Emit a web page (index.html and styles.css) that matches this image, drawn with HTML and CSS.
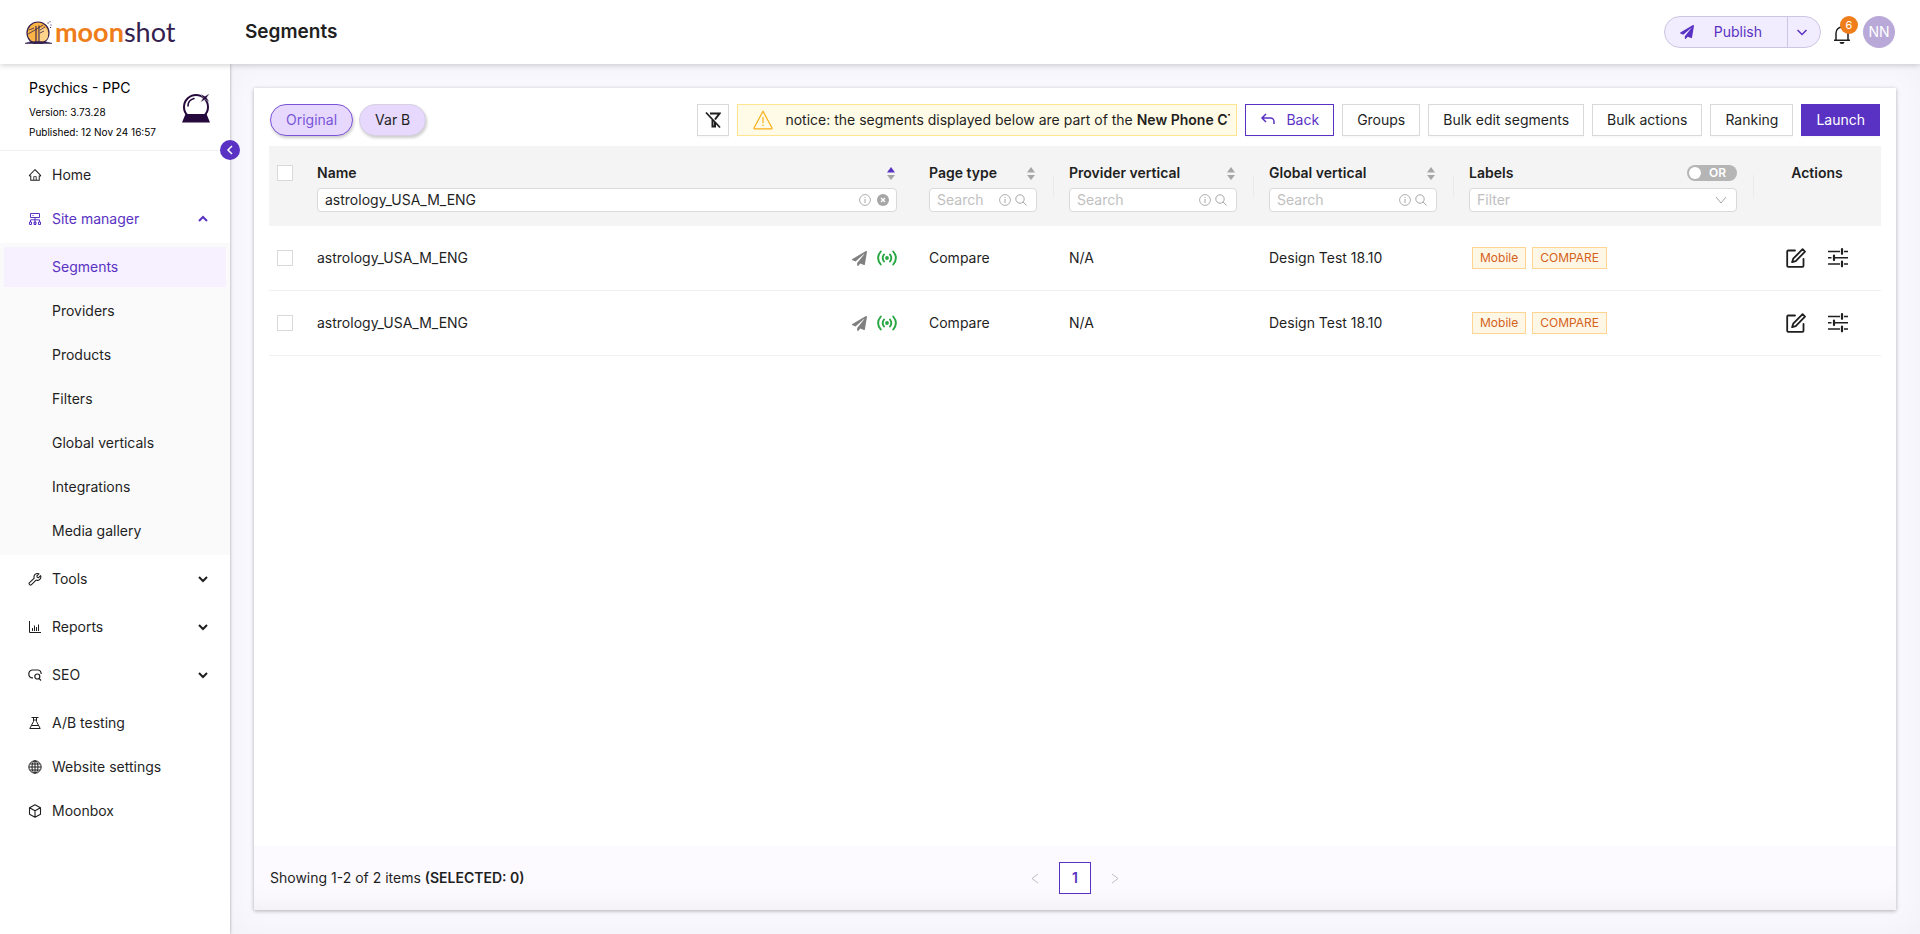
FILE: index.html
```html
<!DOCTYPE html>
<html lang="en">
<head>
<meta charset="utf-8">
<title>Segments</title>
<link rel="stylesheet" href="styles.css">
</head>
<body>
<svg class="sprite" aria-hidden="true">
  <symbol id="home" viewBox="0 0 1024 1024"><path fill="currentColor" d="M946.5 505L560.1 118.8l-25.9-25.9a31.5 31.5 0 00-44.4 0L77.5 505a63.9 63.9 0 00-18.8 46c.4 35.2 29.7 63.3 64.9 63.3h42.5V940h691.8V614.3h43.4c17.1 0 33.2-6.7 45.3-18.8a63.6 63.6 0 0018.7-45.3c0-17-6.7-33.1-18.8-45.2zM568 868H456V664h112v204zm217.9-325.7V868H632V640c0-22.1-17.9-40-40-40H432c-22.1 0-40 17.9-40 40v228H238.1V542.3h-96l370-369.7 23.1 23.1L882 542.3h-96.1z"/></symbol>
  <symbol id="sitemap" viewBox="0 0 14 14"><g fill="none" stroke="currentColor"><path d="M2.5 1.5h9v4h-9zM7 5.500v7M2.500 10V7.800h9V10"/><path d="M1.500 10h2v2.500h-2zM6 10h2v2.500H6zM10.500 10h2v2.500h-2zM4.500 3.500h1"/></g></symbol>
  <symbol id="tool" viewBox="0 0 14 14"><path fill="none" stroke="currentColor" stroke-width="1.100" stroke-linejoin="round" d="M1.300 10.900l4.900-4.700a3.500 3.500 0 014.700-4.400L8.900 3.900l.3 1.400 1.400.3 2-2a3.500 3.500 0 01-4.500 4.500l-4.900 4.700a1 1 0 01-1.300 0l-.6-.6a1 1 0 010-1.300z"/></symbol>
  <symbol id="chart" viewBox="0 0 14 14"><path fill="none" stroke="currentColor" d="M1.500 1v11.500H13M4.500 8v3M6.500 5.500V11M8.500 7v4M10.500 4.500V11"/></symbol>
  <symbol id="seo" viewBox="0 0 14 14"><g fill="none" stroke="currentColor" stroke-width="1.200"><path d="M5 9.900H4Q.8 9.200.8 6T4 2h6q3 .4 3.200 4"/><circle cx="9.300" cy="8.500" r="2.500"/><path d="M11 10.300l2 2.200"/></g></symbol>
  <symbol id="flask" viewBox="0 0 14 14"><g fill="none" stroke="currentColor" stroke-linejoin="round"><path d="M3.500 1.500h7M5.500 1.500v4L1.800 12.500h10.400L8.500 5.500v-4M3.500 9.500h7M5.500 4h3"/></g></symbol>
  <symbol id="globe" viewBox="0 0 14 14"><g fill="none" stroke="currentColor"><circle cx="7" cy="7" r="6.200"/><ellipse cx="7" cy="7" rx="3" ry="6.200"/><path d="M7 1v12M1 7h12M2 4h10M2 10h10"/></g></symbol>
  <symbol id="box" viewBox="0 0 14 14"><path fill="none" stroke="currentColor" stroke-width="1.100" stroke-linejoin="round" d="M7 .8l5.500 2.900v6.600L7 13.200l-5.500-2.900V3.700zM1.500 3.700L7 6.700l5.500-3M7 6.700v6.500"/></symbol>
  <symbol id="plane" viewBox="0 0 512 512"><path fill="currentColor" d="M476 3.200L12.500 270.600c-18.100 10.400-15.800 35.600 2.200 43.200L121 358.400l287.300-253.200c5.500-4.900 13.300 2.600 8.600 8.300L176 407v80.500c0 23.600 28.500 32.900 42.500 15.800L282 426l124.600 52.200c14.200 6 30.400-2.900 33-18.200l72-432C515 7.800 493.300-6.800 476 3.200z"/></symbol>
  <symbol id="down" viewBox="0 0 10 10"><path fill="none" stroke="currentColor" stroke-width="2" d="M1 3l4 4 4-4"/></symbol>
  <symbol id="up" viewBox="0 0 10 10"><path fill="none" stroke="currentColor" stroke-width="2" d="M1 7l4-4 4 4"/></symbol>
  <symbol id="thindown" viewBox="0 0 12 12"><path fill="none" stroke="currentColor" stroke-width="1" d="M1 3l5 6 5-6"/></symbol>
  <symbol id="meddown" viewBox="0 0 12 12"><path fill="none" stroke="currentColor" stroke-width="1.500" d="M1.500 4L6 8.500 10.500 4"/></symbol>
  <symbol id="left" viewBox="0 0 10 10"><path fill="none" stroke="currentColor" stroke-width="1.500" d="M7 1L3 5l4 4"/></symbol>
  <symbol id="prev" viewBox="0 0 12 12"><path fill="none" stroke="currentColor" d="M9 2L3 6.500 9 11"/></symbol>
  <symbol id="next" viewBox="0 0 12 12"><path fill="none" stroke="currentColor" d="M3 2l6 4.500L3 11"/></symbol>
  <symbol id="bell" viewBox="0 0 18 20"><path fill="none" stroke="currentColor" stroke-width="1.500" d="M1 16.200h16M3 16V9a6 6 0 0112 0v7M9 3V1"/><path fill="currentColor" d="M6.500 18h5a2.500 2 0 01-5 0z"/></symbol>
  <symbol id="nofilter" viewBox="0 0 16 18"><g fill="none" stroke="currentColor" stroke-width="2"><path d="M5 2.500h9.500L10 8.500M7.500 9v6.500h2.500v-4.500"/><path stroke-width="1.800" d="M1 1.500l14 15"/></g></symbol>
  <symbol id="warn" viewBox="0 0 20 20"><path fill="none" stroke="currentColor" stroke-width="1.200" stroke-linejoin="round" d="M10 1.200l9 16.800q.2.800-.6.800H1.600q-.8 0-.6-.8z"/><path fill="none" stroke="currentColor" stroke-width="1.200" d="M10 7v6M10 14.500V16"/></symbol>
  <symbol id="back" viewBox="0 0 16 14"><path fill="none" stroke="currentColor" stroke-width="1.500" d="M6 1L2 5l4 4M2 5h8.500a3.500 3.500 0 013.500 3.500V11"/></symbol>
  <symbol id="info" viewBox="0 0 12 12"><circle cx="6" cy="6" r="5.400" fill="none" stroke="currentColor" stroke-width=".9"/><path stroke="currentColor" d="M6 5v4M6 3v1"/></symbol>
  <symbol id="search" viewBox="0 0 12 12"><circle cx="5" cy="5" r="4.200" fill="none" stroke="currentColor"/><path stroke="currentColor" d="M8 8l3.600 3.600"/></symbol>
  <symbol id="clear" viewBox="0 0 12 12"><circle cx="6" cy="6" r="6" fill="currentColor"/><path stroke="#fff" stroke-width="1.300" d="M4 4l4 4M8 4L4 8"/></symbol>
  <symbol id="live" viewBox="0 0 20 16"><g fill="none" stroke="currentColor" stroke-width="1.900" stroke-linecap="round"><path d="M3.800 1.500q-5.400 6.500 0 13M16.200 1.500q5.400 6.500 0 13M7 4.500q-2.600 3.500 0 7M13 4.500q2.600 3.500 0 7"/></g><circle cx="10" cy="8" r="1.900" fill="currentColor"/></symbol>
  <symbol id="edit" viewBox="0 0 20 20"><g fill="none" stroke="currentColor" stroke-width="1.800" stroke-linejoin="round" stroke-linecap="round"><path d="M9 2.500H2.200q-1 0-1 1v14.300q0 1 1 1h14.300q1 0 1-1v-7"/><path d="M16.600 1.200l2.400 2.400-9.300 9.600-3.600 1 1.100-3.500z"/></g></symbol>
  <symbol id="tune" viewBox="0 0 20 20"><path fill="none" stroke="currentColor" stroke-width="1.500" d="M0 3.500h12M16 3.500h4M0 9.800h3.500M7 9.800h13M0 16h12M16 16h4"/><path fill="none" stroke="currentColor" stroke-width="2.200" stroke-linecap="round" d="M14 1.200v4.600M6 7.500v4.600M14 13.700v4.600"/></symbol>
</svg>

<header class="topbar">
  <a class="logo" href="#" aria-label="moonshot">
    <svg class="logo-mark" viewBox="0 0 27 23" aria-hidden="true">
      <circle cx="13" cy="12" r="11" fill="#fbb445" stroke="#33204f" stroke-width="1.200"/>
      <path d="M14 7q8-2 9 5t-5 8h-5z" fill="#fdd48a"/>
      <path d="M11 5v16M14 4.500V21" fill="none" stroke="#33204f" stroke-width="1.100"/><path d="M3 13l7-4 8-5M4 9l5-2M15 9l5-3M15 12l4-2" fill="none" stroke="#33204f" stroke-width=".8"/>
      <path d="M0 22.400q4-2 13-2t14 2z" fill="#33204f" stroke="#33204f" stroke-width=".6"/>
      <path d="M22.500 2h1.200M25.500 4h1M24.500.800h1M25 6.500h1" stroke="#33204f"/>
    </svg>
    <span class="logo-text"><b>moon</b>shot</span>
  </a>
  <h1 class="title">Segments</h1>
  <div class="top-actions">
    <div class="publish">
      <button class="publish-main" type="button"><svg class="i14"><use href="#plane"/></svg><span>Publish</span></button>
      <button class="publish-more" type="button" aria-label="More publish options"><svg class="i12"><use href="#meddown"/></svg></button>
    </div>
    <button class="bell" type="button" aria-label="Notifications"><svg><use href="#bell"/></svg><span class="badge">6</span></button>
    <button class="avatar" type="button">NN</button>
  </div>
</header>

<div class="shell">
  <aside class="sidebar">
    <div class="project">
      <div class="project-text">
        <div class="project-name">Psychics - PPC</div>
        <div class="project-meta">Version: 3.73.28</div>
        <div class="project-meta">Published: 12 Nov 24 16:57</div>
      </div>
      <svg class="ball" viewBox="0 0 28 30" aria-hidden="true">
        <circle cx="14" cy="14" r="12" fill="#fff" stroke="#260a3d" stroke-width="2"/>
        <path d="M6 13q0-6 6-7.500" fill="none" stroke="#260a3d" stroke-width="1.600" stroke-linecap="round"/>
        <path d="M3.500 21h21L28 29.500H0z" fill="#260a3d"/>
        <path d="M18.500 1l4.500 2.200L27.500.5l-2.800 4.200L27.500 9 23 6.500l-4.500 2.700 2.600-4.500z" fill="#260a3d" stroke="#fff" stroke-width=".4"/>
      </svg>
      <button class="collapse" type="button" aria-label="Collapse menu"><svg><use href="#left"/></svg></button>
    </div>
    <nav class="menu">
      <a class="item" href="#"><svg class="i14"><use href="#home"/></svg>Home</a>
      <a class="item active" href="#"><svg class="i14"><use href="#sitemap"/></svg>Site manager<svg class="arrow"><use href="#up"/></svg></a>
      <div class="submenu">
        <a class="item selected" href="#">Segments</a>
        <a class="item" href="#">Providers</a>
        <a class="item" href="#">Products</a>
        <a class="item" href="#">Filters</a>
        <a class="item" href="#">Global verticals</a>
        <a class="item" href="#">Integrations</a>
        <a class="item" href="#">Media gallery</a>
      </div>
      <div class="groups">
        <a class="item" href="#"><svg class="i14"><use href="#tool"/></svg>Tools<svg class="arrow"><use href="#down"/></svg></a>
        <a class="item" href="#"><svg class="i14"><use href="#chart"/></svg>Reports<svg class="arrow"><use href="#down"/></svg></a>
        <a class="item" href="#"><svg class="i14"><use href="#seo"/></svg>SEO<svg class="arrow"><use href="#down"/></svg></a>
      </div>
      <a class="item" href="#"><svg class="i14"><use href="#flask"/></svg>A/B testing</a>
      <a class="item" href="#"><svg class="i14"><use href="#globe"/></svg>Website settings</a>
      <a class="item" href="#"><svg class="i14"><use href="#box"/></svg>Moonbox</a>
    </nav>
  </aside>

  <main class="content">
    <section class="panel">
      <div class="toolbar">
        <button class="pill on" type="button">Original</button>
        <button class="pill" type="button">Var B</button>
        <div class="tools">
          <button class="btn square" type="button" aria-label="Clear filters"><svg><use href="#nofilter"/></svg></button>
          <div class="notice"><svg><use href="#warn"/></svg><p>notice: the segments displayed below are part of the <b>New Phone CT</b></p></div>
          <button class="btn outline" type="button"><svg><use href="#back"/></svg>Back</button>
          <button class="btn" type="button">Groups</button>
          <button class="btn" type="button">Bulk edit segments</button>
          <button class="btn" type="button">Bulk actions</button>
          <button class="btn" type="button">Ranking</button>
          <button class="btn primary" type="button">Launch</button>
        </div>
      </div>

      <div class="grid-wrap">
      <table class="grid">
        <colgroup><col class="c-check"><col><col class="c-page"><col class="c-vert"><col class="c-vert"><col class="c-labels"><col class="c-actions"></colgroup>
        <thead>
          <tr>
            <th class="check"><input type="checkbox" aria-label="Select all"></th>
            <th>
              <div class="head"><label for="f-name">Name</label><svg class="sort asc" viewBox="0 0 8 13"><path class="s-up" d="M0 5.500L4 0l4 5.500z"/><path class="s-down" d="M0 8h8l-4 5z"/></svg></div>
              <div class="field"><input id="f-name" type="text" value="astrology_USA_M_ENG"><svg class="i12"><use href="#info"/></svg><svg class="i12 clear"><use href="#clear"/></svg></div>
            </th>
            <th>
              <div class="head"><label for="f-page">Page type</label><svg class="sort" viewBox="0 0 8 13"><path class="s-up" d="M0 5.500L4 0l4 5.500z"/><path class="s-down" d="M0 8h8l-4 5z"/></svg></div>
              <div class="field"><input id="f-page" type="text" placeholder="Search"><svg class="i12"><use href="#info"/></svg><svg class="i12"><use href="#search"/></svg></div>
            </th>
            <th class="sep">
              <div class="head"><label for="f-prov">Provider vertical</label><svg class="sort" viewBox="0 0 8 13"><path class="s-up" d="M0 5.500L4 0l4 5.500z"/><path class="s-down" d="M0 8h8l-4 5z"/></svg></div>
              <div class="field"><input id="f-prov" type="text" placeholder="Search"><svg class="i12"><use href="#info"/></svg><svg class="i12"><use href="#search"/></svg></div>
            </th>
            <th class="sep">
              <div class="head"><label for="f-glob">Global vertical</label><svg class="sort" viewBox="0 0 8 13"><path class="s-up" d="M0 5.500L4 0l4 5.500z"/><path class="s-down" d="M0 8h8l-4 5z"/></svg></div>
              <div class="field"><input id="f-glob" type="text" placeholder="Search"><svg class="i12"><use href="#info"/></svg><svg class="i12"><use href="#search"/></svg></div>
            </th>
            <th class="sep">
              <div class="head"><label for="f-lab">Labels</label><button class="switch" type="button" role="switch" aria-checked="false"><i></i>OR</button></div>
              <div class="field select"><select id="f-lab"><option>Filter</option></select><svg class="i12"><use href="#thindown"/></svg></div>
            </th>
            <th class="sep center"><div class="head">Actions</div></th>
          </tr>
        </thead>
        <tbody>
          <tr>
            <td class="check"><input type="checkbox" aria-label="Select row 1"></td>
            <td><div class="name">astrology_USA_M_ENG<span class="status"><svg class="i16"><use href="#plane"/></svg><svg class="live"><use href="#live"/></svg></span></div></td>
            <td>Compare</td><td>N/A</td><td>Design Test 18.10</td>
            <td><div class="tags"><span class="tag">Mobile</span><span class="tag">COMPARE</span></div></td>
            <td><div class="acts"><button type="button" aria-label="Edit"><svg><use href="#edit"/></svg></button><button type="button" aria-label="Settings"><svg><use href="#tune"/></svg></button></div></td>
          </tr>
          <tr>
            <td class="check"><input type="checkbox" aria-label="Select row 2"></td>
            <td><div class="name">astrology_USA_M_ENG<span class="status"><svg class="i16"><use href="#plane"/></svg><svg class="live"><use href="#live"/></svg></span></div></td>
            <td>Compare</td><td>N/A</td><td>Design Test 18.10</td>
            <td><div class="tags"><span class="tag">Mobile</span><span class="tag">COMPARE</span></div></td>
            <td><div class="acts"><button type="button" aria-label="Edit"><svg><use href="#edit"/></svg></button><button type="button" aria-label="Settings"><svg><use href="#tune"/></svg></button></div></td>
          </tr>
        </tbody>
      </table>
      </div>

      <footer class="foot">
        <p>Showing 1-2 of 2 items <b>(SELECTED: 0)</b></p>
        <div class="pager">
          <button type="button" aria-label="Previous page"><svg class="i12"><use href="#prev"/></svg></button>
          <button class="current" type="button">1</button>
          <button type="button" aria-label="Next page"><svg class="i12"><use href="#next"/></svg></button>
        </div>
      </footer>
    </section>
  </main>
</div>
</body>
</html>
```
FILE: styles.css
```css
:root {
  --purple: #5a32c3;
  --ink: #1f1f1f;
  --line: #d9d9d9;
  --orange: #ef7d1a;
}
* { box-sizing: border-box; }
body {
  margin: 0;
  min-height: 100vh;
  display: flex;
  flex-direction: column;
  font: 14px/22px Inter, "Liberation Sans", sans-serif;
  color: var(--ink);
  background: #fff;
}
button, input, select { font: inherit; color: inherit; margin: 0; }
button { padding: 0; border: 0; background: none; cursor: pointer; }
a { color: inherit; text-decoration: none; }
p, h1 { margin: 0; }
b { font-weight: 600; }
svg { display: block; flex: none; }
.sprite { position: absolute; width: 0; height: 0; }
.i12 { width: 12px; height: 12px; }
.i14 { width: 14px; height: 14px; }
.i16 { width: 15px; height: 15px; }

/* Top bar */
.topbar {
  position: relative;
  z-index: 2;
  display: flex;
  align-items: center;
  height: 64px;
  padding: 0 25px;
  background: #fff;
  box-shadow: 0 1px 6px rgba(0, 0, 0, .2);
}
.logo { display: flex; align-items: center; gap: 3px; width: 220px; }
.logo-mark { width: 27px; height: 23px; }
.logo-text { font: 27px/32px Lato, sans-serif; color: #33204f; }
.logo-text b { font-weight: 700; color: var(--orange); }
.title { flex: 1; font-size: 19px; line-height: 28px; font-weight: 600; }
.top-actions { display: flex; align-items: center; gap: 12px; }
.publish {
  display: flex;
  height: 32px;
  border: 1px solid #cdc6e2;
  border-radius: 16px;
  background: #f1ecfe;
  color: var(--purple);
}
.publish-main { display: flex; align-items: center; gap: 20px; padding: 0 25px 0 15px; }
.publish-more { display: flex; align-items: center; padding: 0 12px 0 8px; border-left: 1px solid #cdc6e2; }
.bell { position: relative; padding: 4px 0 0; }
.bell svg { width: 18px; height: 20px; }
.badge {
  position: absolute;
  top: -4px;
  left: 7px;
  width: 18px;
  height: 18px;
  border-radius: 9px;
  background: var(--orange);
  color: #fff;
  font-size: 11px;
  line-height: 18px;
  text-align: center;
}
.avatar { width: 32px; height: 32px; border-radius: 50%; background: #b9a9d9; color: #fff; }

/* Side menu */
.shell { flex: 1; display: flex; }
.sidebar {
  position: relative;
  z-index: 1;
  flex: none;
  width: 230px;
  background: #fff;
  box-shadow: 0 0 3px rgba(0, 0, 0, .35);
}
.project {
  position: relative;
  display: flex;
  justify-content: space-between;
  padding: 14px 20px 8px 29px;
  border-bottom: 1px solid #f0f0f0;
  color: #000;
}
.project-name { line-height: 20px; margin-bottom: 4px; }
.project-meta { font-size: 10px; line-height: 20px; }
.ball { width: 28px; height: 30px; margin-top: 15px; }
.collapse {
  position: absolute;
  right: -10px;
  bottom: -10px;
  display: flex;
  align-items: center;
  justify-content: center;
  width: 20px;
  height: 20px;
  border-radius: 50%;
  background: var(--purple);
  color: #fff;
}
.collapse svg { width: 10px; height: 10px; }
.menu { display: flex; flex-direction: column; gap: 4px; padding-top: 4px; }
.item {
  display: flex;
  align-items: center;
  gap: 10px;
  height: 40px;
  margin: 0 4px;
  padding: 0 18px 0 24px;
}
.arrow { width: 10px; height: 10px; margin-left: auto; }
.active { color: var(--purple); }
.submenu { display: flex; flex-direction: column; gap: 4px; padding: 4px 0; background: #fafafa; }
.submenu .item { padding-left: 48px; }
.submenu .selected { background: #f6f0ff; color: var(--purple); }
.groups { display: flex; flex-direction: column; gap: 8px; margin-bottom: 4px; }

/* Page panel */
.content {
  flex: 1;
  min-width: 0;
  display: flex;
  padding: 24px;
  background: #faf9ff;
  box-shadow: inset 0 0 40px rgba(0, 0, 0, .04);
}
.panel {
  flex: 1;
  min-width: 0;
  display: flex;
  flex-direction: column;
  background: #fff;
  box-shadow: 0 1px 4px rgba(0, 0, 0, .3);
}
.toolbar { display: flex; gap: 6px; padding: 16px 16px 10px; }
.pill {
  height: 32px;
  padding: 0 15px;
  border: 1px solid #d6d0e0;
  border-radius: 16px;
  background: #e6d9fd;
  box-shadow: 1px 2px 3px rgba(0, 0, 0, .2);
}
.pill.on { border-color: #7a55d8; color: #7a55d8; }
.tools { display: flex; gap: 8px; flex: 1; min-width: 0; justify-content: flex-end; }
.btn {
  display: flex;
  align-items: center;
  justify-content: center;
  gap: 10px;
  height: 32px;
  padding: 0 14px;
  border: 1px solid var(--line);
  background: #fff;
  white-space: nowrap;
  box-shadow: 0 2px 0 rgba(0, 0, 0, .02);
}
.btn svg { width: 16px; height: 14px; }
.btn.square { width: 32px; padding: 0; }
.btn.square svg { width: 16px; height: 18px; }
.btn.outline { border-color: var(--purple); color: var(--purple); }
.btn.primary { border-color: var(--purple); background: var(--purple); color: #fff; }
.notice {
  display: flex;
  align-items: center;
  gap: 12px;
  width: 500px;
  height: 32px;
  padding: 0 6px 0 15px;
  border: 1px solid #ffe58f;
  background: #fffbe6;
}
.notice svg { width: 20px; height: 20px; color: #faad14; }
.notice p { flex: 1; overflow: hidden; white-space: nowrap; }

/* Table */
.grid-wrap { padding: 0 15px; }
.grid { width: 100%; border-spacing: 0; table-layout: fixed; }
.c-check { width: 32px; }
.c-page { width: 140px; }
.c-vert { width: 200px; }
.c-labels { width: 300px; }
.c-actions { width: 128px; }
.grid th {
  height: 80px;
  padding: 16px 16px 14px;
  background: #f4f4f4;
  text-align: left;
  font-weight: 600;
  vertical-align: top;
}
.grid th.sep {
  background: linear-gradient(#eaeaea, #eaeaea) left center / 1px 22px no-repeat #f4f4f4;
}
.grid th.center .head { justify-content: center; }
.grid td { height: 65px; padding: 0 16px; border-bottom: 1px solid #f0f0f0; }
.grid .check { padding: 0 8px; }
.grid th.check { padding-top: 19px; }
input[type="checkbox"] {
  appearance: none;
  display: block;
  width: 16px;
  height: 16px;
  border: 1px solid var(--line);
  background: #fff;
}
.head { display: flex; align-items: center; justify-content: space-between; height: 22px; margin-bottom: 4px; }
.sort { width: 8px; height: 13px; margin-right: 2px; fill: #a6a6a6; }
.sort.asc .s-up { fill: var(--purple); }
.field {
  display: flex;
  align-items: center;
  gap: 4px;
  height: 24px;
  padding: 0 9px 0 7px;
  border: 1px solid var(--line);
  border-radius: 4px;
  background: #fff;
  color: #a6a6a6;
}
.field input, .field select {
  flex: 1;
  min-width: 0;
  height: 22px;
  padding: 0;
  border: 0;
  outline: 0;
  background: none;
  appearance: none;
  font-weight: 400;
}
.field input { color: var(--ink); }
.field input::placeholder { color: #bfbfbf; }
.field select { color: #bfbfbf; }
.field .clear { margin: 0 -2px 0 2px; }
.switch {
  display: flex;
  align-items: center;
  gap: 8px;
  width: 50px;
  height: 16px;
  padding: 0 2px;
  border-radius: 8px;
  background: #b5b5b5;
  color: #fff;
  font-size: 12px;
  line-height: 16px;
}
.switch i { width: 12px; height: 12px; border-radius: 50%; background: #fff; }
.name, .status { display: flex; align-items: center; }
.name { justify-content: space-between; }
.status { gap: 10px; color: #808080; }
.live { width: 20px; height: 16px; color: #28a745; }
.tags { display: flex; gap: 6px; padding-left: 3px; }
.tag {
  height: 22px;
  padding: 0 7px;
  border: 1px solid #ffd591;
  background: #fff7e6;
  color: #d4621a;
  font-size: 12px;
  line-height: 20px;
}
.acts { display: flex; justify-content: center; gap: 22px; }
.acts svg { width: 20px; height: 20px; }

/* Footer */
.foot {
  display: grid;
  grid-template-columns: 1fr auto 1fr;
  align-items: center;
  height: 64px;
  margin-top: auto;
  padding: 0 16px;
  background: #fcfaff;
  box-shadow: inset 0 -20px 24px -16px rgba(0, 0, 0, .05);
}
.pager { display: flex; gap: 8px; }
.pager button { display: grid; place-items: center; width: 32px; height: 32px; color: #bfbfbf; }
.pager .current { border: 1px solid var(--purple); background: #fff; color: var(--purple); font-weight: 600; }
```
